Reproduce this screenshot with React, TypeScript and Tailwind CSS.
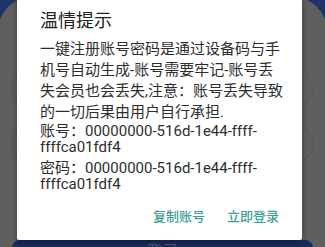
import React from "react";

const font = { fontFamily: 'Roboto, "Noto Sans CJK SC", sans-serif' };

export default function App() {
  return (
    <div
      className="relative w-[325px] h-[247px] overflow-hidden bg-[#1f3368]"
      style={font}
    >
      {/* page behind the dialog, already dimmed by the overlay */}
      <div className="-mt-[3px] -mx-[2px] rounded-t-[34px] bg-[#5f5f5f] pt-[75px] px-[14px] pb-[40px]">
        <div className="h-[33px] rounded-[16px] border border-[#565656]" />
        <div className="mt-[22px] h-[35px] rounded-[16px] border border-[#565656]" />
        <div className="mt-[78px] h-[44px] rounded-[8px] bg-[#1b2b5b] flex justify-center pt-[1px]">
          <span className="text-[16px] leading-[22px] text-[#4a5884]">登录</span>
        </div>
      </div>

      {/* dialog */}
      <div className="absolute left-[17px] top-[-4px] w-[285px] bg-white rounded-[2px] shadow-[0_2px_6px_rgba(0,0,0,0.35)] pt-[12px] pb-[13px] pl-[23px] pr-[18px]">
        <h2 className="text-[18px] leading-[26px] text-[#222]">温情提示</h2>
        <p className="mt-[5px] text-[15px] leading-[21px] text-[#2e2e2e]">
          一键注册账号密码是通过设备码与手机号自动生成-账号需要牢记-账号丢失会员也会丢失,注意：账号丢失导致的一切后果由用户自行承担.
        </p>
        <p className="text-[15px] leading-[16px] text-[#2e2e2e]">
          账号：00000000-516d-1e44-ffff-ffffca01fdf4
        </p>
        <p className="mt-[5px] text-[15px] leading-[16px] text-[#2e2e2e]">
          密码：00000000-516d-1e44-ffff-ffffca01fdf4
        </p>
        <div className="mt-[15px] flex justify-end gap-[22px] pr-[5px]">
          <button className="text-[13px] leading-[20px] font-medium text-[#3f9f95]">
            复制账号
          </button>
          <button className="text-[13px] leading-[20px] font-medium text-[#3f9f95]">
            立即登录
          </button>
        </div>
      </div>
    </div>
  );
}
